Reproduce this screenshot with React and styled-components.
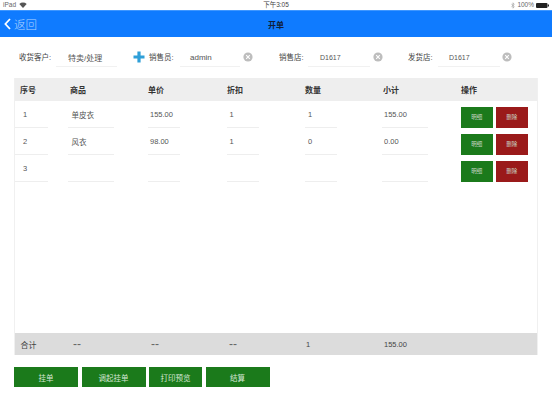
import React from "react";
import styled, { createGlobalStyle } from "styled-components";

const Global = createGlobalStyle`
  html, body { margin: 0; padding: 0; background: #fff; }
  body { font-family: "Liberation Sans", "Noto Sans CJK SC", sans-serif; width: 552px; height: 414px; overflow: hidden; }
`;
const COLS = "53px 80px 79px 78px 77px 79px 1fr";

const Page = styled.div`display: flex; flex-direction: column; width: 552px; height: 414px;`;
const StatusBar = styled.div`
  height: 10px; display: grid; grid-template-columns: 1fr auto 1fr; align-items: center;
  padding: 0 3px; font-size: 6.5px; color: #444; background: #fff; line-height: 10px;
`;
const StatusLeft = styled.div`display: flex; align-items: center; gap: 3px; color: #666;`;
const StatusRight = styled.div`display: flex; align-items: center; justify-content: flex-end; gap: 2px; color: #666;`;
const NavBar = styled.div`
  height: 27px; background: #0f7bff; position: relative; display: flex; align-items: center; justify-content: center;
  border-top: 1px solid #3f97ff; box-sizing: border-box;
`;
const Back = styled.div`
  position: absolute; left: 4px; top: 0; height: 100%; display: flex; align-items: center; gap: 3px;
  color: #b4d5ff; font-size: 11.5px; font-weight: 300;
`;
const Title = styled.div`color: #10203a; font-size: 8px; font-weight: 700;`;

const FormRow = styled.div`display: flex; height: 41px; align-items: center;`;
const Group = styled.div`display: flex; align-items: center; flex: none; margin-left: ${(p) => p.$ml}px;`;
const Label = styled.span`
  font-size: 7.5px; color: #444; white-space: nowrap; margin-top: -3px; width: ${(p) => p.$w}px; flex: none;
`;
const Field = styled.div`
  display: flex; align-items: center; height: 17px; margin-top: 1px; border-bottom: 1px solid #f1f1f1;
  font-size: ${(p) => p.$fs ?? 8}px; color: #555; width: ${(p) => p.$w}px; padding-left: ${(p) => p.$pl}px;
  box-sizing: border-box; flex: none;
`;
const Clear = styled.span`
  width: 10px; height: 10px; flex: none; margin-left: ${(p) => p.$ml}px; margin-top: -1px; display: flex;
`;
const Plus = styled.span`display: flex; flex: none; margin-left: 16px; margin-top: -2px;`;

const Table = styled.div`
  margin: 0 14px; height: 277px; display: flex; flex-direction: column; box-sizing: border-box;
  border-left: 1px solid #f0f0f0; border-right: 1px solid #f0f0f0;
`;
const Header = styled.div`
  display: grid; grid-template-columns: ${COLS}; height: 23px; background: #eeeeee; align-items: center;
  font-size: 8px; font-weight: 700; color: #333; flex: none;
`;
const HeadCell = styled.div`padding-left: ${(p) => p.$pl ?? 0}px;`;
const Body = styled.div`flex: 1; display: flex; flex-direction: column;`;
const Row = styled.div`display: grid; grid-template-columns: ${COLS}; height: 27px; flex: none;`;
const CellLine = styled.div`
  height: 27px; box-sizing: border-box; border-bottom: 1px solid #eeeeee; font-size: 7.5px; color: #555;
  display: flex; align-items: center; padding-top: 1px; width: ${(p) => p.$w}px;
  padding-left: ${(p) => p.$pl ?? 0}px;
`;
const Ops = styled.div`display: flex; gap: 3.5px; padding-top: 6px;`;
const OpButton = styled.div`
  width: ${(p) => p.$w}px; height: 20.5px; background: ${(p) => p.$bg}; color: #c9d6c9; font-size: 5.5px;
  display: flex; align-items: center; justify-content: center; box-sizing: border-box;
`;
const Footer = styled.div`
  display: grid; grid-template-columns: ${COLS}; height: 22px; background: #dcdcdc; align-items: center;
  font-size: 7.5px; color: #444; flex: none;
`;
const FootCell = styled.div`padding-left: ${(p) => p.$pl ?? 0}px; font-size: ${(p) => p.$fs ?? 7.5}px;`;
const Dash = styled(FootCell)`font-size: 12px; line-height: 10px; color: #666;`;
const Actions = styled.div`display: flex; gap: 3.5px; margin: 12px 0 0 14px;`;
const ActionButton = styled.div`
  width: ${(p) => p.$w}px; height: 20px; background: #1b7a1b; color: #d5e6d5; font-size: 7.5px;
  display: flex; align-items: center; justify-content: center;
`;

const ClearIcon = () => (
  <svg width="10" height="10" viewBox="0 0 10 10">
    <circle cx="5" cy="5" r="4.6" fill="#bdbdbd" />
    <path d="M3.2 3.2 L6.8 6.8 M6.8 3.2 L3.2 6.8" stroke="#fff" strokeWidth="1.1" />
  </svg>
);
const PlusIcon = () => (
  <svg width="12" height="12" viewBox="0 0 12 12">
    <path d="M4.4 0.5 H7.6 V4.4 H11.5 V7.6 H7.6 V11.5 H4.4 V7.6 H0.5 V4.4 H4.4 Z" fill="#2f9fd8" />
  </svg>
);
const Wifi = () => (
  <svg width="8" height="6" viewBox="0 0 8 6">
    <path d="M4 6 L0.3 2 A5.4 5.4 0 0 1 7.7 2 Z" fill="#555" />
  </svg>
);
const Bluetooth = () => (
  <svg width="4" height="7" viewBox="0 0 4 7">
    <path d="M0.4 1.8 L3.2 4.8 L2 6.2 V0.8 L3.2 2.2 L0.4 5.2" fill="none" stroke="#999" strokeWidth="0.6" />
  </svg>
);
const BatteryIcon = () => (
  <svg width="13" height="5" viewBox="0 0 13 5">
    <rect x="0" y="0" width="11.5" height="5" rx="1" fill="#222" />
    <rect x="11.8" y="1.5" width="1.2" height="2" fill="#222" />
  </svg>
);
const Chevron = () => (
  <svg width="7" height="12" viewBox="0 0 7 12">
    <path d="M6 1 L1.4 6 L6 11" fill="none" stroke="#fff" strokeWidth="1.8" />
  </svg>
);

const rows = [
  ["1", "单皮衣", "155.00", "1", "1", "155.00"],
  ["2", "风衣", "98.00", "1", "0", "0.00"],
  ["3", "", "", "", "", ""],
];

export default function App() {
  return (
    <Page>
      <Global />
      <StatusBar>
        <StatusLeft>iPad <Wifi /></StatusLeft>
        <span>下午3:05</span>
        <StatusRight><Bluetooth /> 100% <BatteryIcon /></StatusRight>
      </StatusBar>
      <NavBar>
        <Back><Chevron />返回</Back>
        <Title>开单</Title>
      </NavBar>
      <FormRow>
        <Group $ml={19}>
          <Label $w={37}>收货客户:</Label>
          <Field $w={61} $pl={12}>特卖/处理</Field>
        </Group>
        <Plus><PlusIcon /></Plus>
        <Group $ml={4}>
          <Label $w={31}>销售员:</Label>
          <Field $w={60} $pl={10}>admin</Field>
          <Clear $ml={3}><ClearIcon /></Clear>
        </Group>
        <Group $ml={26}>
          <Label $w={29}>销售店:</Label>
          <Field $w={62} $pl={12} $fs={7}>D1617</Field>
          <Clear $ml={3}><ClearIcon /></Clear>
        </Group>
        <Group $ml={25}>
          <Label $w={30}>发货店:</Label>
          <Field $w={62} $pl={11} $fs={7}>D1617</Field>
          <Clear $ml={2}><ClearIcon /></Clear>
        </Group>
      </FormRow>
      <Table>
        <Header>
          <HeadCell $pl={5}>序号</HeadCell>
          <HeadCell $pl={2}>商品</HeadCell>
          <HeadCell>单价</HeadCell>
          <HeadCell>折扣</HeadCell>
          <HeadCell>数量</HeadCell>
          <HeadCell $pl={1}>小计</HeadCell>
          <HeadCell>操作</HeadCell>
        </Header>
        <Body>
          {rows.map((r) => (
            <Row key={r[0]}>
              <CellLine $w={33} $pl={8}>{r[0]}</CellLine>
              <CellLine $w={46} $pl={3.5}>{r[1]}</CellLine>
              <CellLine $w={32} $pl={2}>{r[2]}</CellLine>
              <CellLine $w={32} $pl={2.5}>{r[3]}</CellLine>
              <CellLine $w={32} $pl={3}>{r[4]}</CellLine>
              <CellLine $w={46} $pl={2}>{r[5]}</CellLine>
              <Ops>
                <OpButton $w={31.5} $bg="#1b7a1b">明细</OpButton>
                <OpButton $w={31.5} $bg="#9a1a1a">删除</OpButton>
              </Ops>
            </Row>
          ))}
        </Body>
        <Footer>
          <FootCell $pl={5.5} $fs={8}>合计</FootCell>
          <Dash $pl={5}>--</Dash>
          <Dash $pl={3}>--</Dash>
          <Dash $pl={2}>--</Dash>
          <FootCell $pl={1}>1</FootCell>
          <FootCell $pl={2}>155.00</FootCell>
          <FootCell />
        </Footer>
      </Table>
      <Actions>
        <ActionButton $w={64}>挂单</ActionButton>
        <ActionButton $w={64}>调起挂单</ActionButton>
        <ActionButton $w={53}>打印预览</ActionButton>
        <ActionButton $w={64}>结算</ActionButton>
      </Actions>
    </Page>
  );
}
